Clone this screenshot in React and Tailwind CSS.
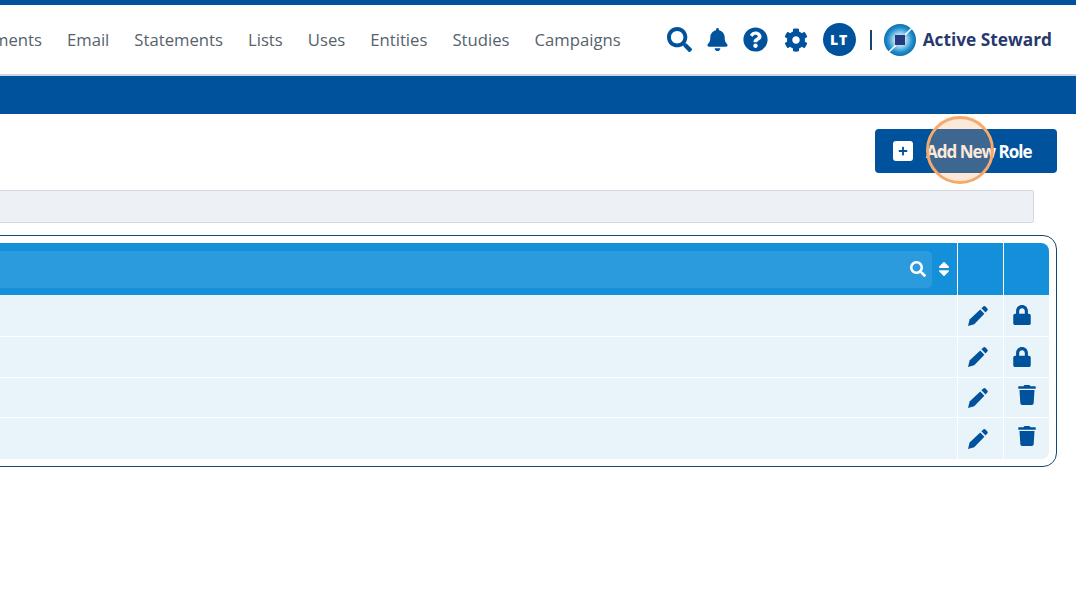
import { FaSearch, FaBell, FaQuestionCircle, FaCog, FaLock, FaTrash, FaPlus, FaSort } from 'react-icons/fa';

const navItems = ['Assessments', 'Email', 'Statements', 'Lists', 'Uses', 'Entities', 'Studies', 'Campaigns'];
const rows = [
  { h: 'h-[42px]', last: 'lock' },
  { h: 'h-[41px]', last: 'lock' },
  { h: 'h-[40px]', last: 'trash' },
  { h: 'h-[41px]', last: 'trash' },
];

function Logo() {
  return (
    <svg width="32" height="32" viewBox="0 0 32 32" className="shrink-0">
      <defs>
        <radialGradient id="orb" cx="50%" cy="50%" r="55%">
          <stop offset="0%" stopColor="#ffffff" />
          <stop offset="35%" stopColor="#a9d8ef" />
          <stop offset="70%" stopColor="#1f8fce" />
          <stop offset="100%" stopColor="#0b5f9e" />
        </radialGradient>
      </defs>
      <circle cx="16" cy="16" r="16" fill="url(#orb)" />
      <path d="M4 29 L12 21 M21 11 L29 3" stroke="#fff" strokeWidth="1.6" />
      <rect x="11" y="11" width="10" height="10" fill="#27397f" />
    </svg>
  );
}

function Pencil() {
  return (
    <svg width="20" height="20" viewBox="0 0 20 20" fill="currentColor">
      <path d="M0 20 L1.6 13.6 L12.2 3.4 L16.4 7.8 L6.2 18.2 Z" />
      <path d="M13.4 2.3 L15.3 .5 Q16.4 -.3 17.5 .6 L19.3 2.4 Q20.3 3.5 19.3 4.6 L17.5 6.6 Z" />
    </svg>
  );
}

function Row({ h, last, isLast }) {
  return (
    <div className={`flex ${h} ${isLast ? '' : 'border-b border-white'}`}>
      <div className="flex-1 bg-[#e8f3fa]" />
      <div className="w-[46px] bg-[#e8f3fa] border-l border-white flex items-center justify-center pr-[5px] text-[#00529c]">
        <Pencil />
      </div>
      <div className="w-[46px] bg-[#e8f3fa] border-l border-white flex justify-center text-[#00529c]">
        {last === 'lock' ? (
          <FaLock className="text-[20px] mt-[10px] mr-[10px]" />
        ) : (
          <FaTrash className={`text-[20px] ${isLast ? 'mt-[8px]' : 'mt-[7px]'}`} />
        )}
      </div>
    </div>
  );
}

export default function App() {
  return (
    <div className="relative h-[600px] w-[1076px] overflow-hidden bg-white font-['Open_Sans',sans-serif]">
      <div className="h-[5px] bg-[#00529c]" />
      <header className="flex h-[71px] items-center border-b-2 border-[#cfd5e2] bg-white">
        <nav className="flex min-w-0 flex-1 justify-end gap-[25px] overflow-hidden pr-[46px] text-[16.7px] text-[#56626d]">
          {navItems.map((item) => (
            <span key={item} className="shrink-0">{item}</span>
          ))}
        </nav>
        <div className="flex shrink-0 items-center pr-[24px] text-[#00529c]">
          <FaSearch className="text-[25px]" />
          <FaBell className="ml-[14px] text-[23px]" />
          <FaQuestionCircle className="ml-[14px] text-[25px]" />
          <FaCog className="ml-[16px] text-[24px]" />
          <div className="ml-[15px] flex h-[33px] w-[33px] items-center justify-center rounded-full bg-[#00529c] text-[14px] font-extrabold tracking-[1px] text-white">LT</div>
          <div className="ml-[14px] mr-[12px] h-[20px] w-[2px] bg-[#1c4468]" />
          <Logo />
          <span className="ml-[7px] text-[17.3px] font-bold text-[#27396f]">Active Steward</span>
        </div>
      </header>
      <div className="h-[38px] bg-[#00529c]" />

      <div className="flex justify-end pt-[15px] pr-[19px]">
        <button type="button" className="flex h-[44px] w-[182px] items-center rounded-[4px] bg-[#00529c] pl-[18px] text-white">
          <span className="flex h-[20px] w-[20px] items-center justify-center rounded-[3px] bg-white text-[#00529c]">
            <FaPlus className="text-[10px]" />
          </span>
          <span className="ml-[13px] translate-y-px text-[17px] font-bold tracking-[-1px]">Add New Role</span>
        </button>
      </div>

      <div className="mt-[17px] mr-[42px] -ml-[10px] h-[33px] rounded-[2px] border border-[#d5dae1] bg-[#edf0f5]" />

      <div className="mt-[12px] mr-[19px] -ml-[20px] rounded-[14px] border border-[#12496e] p-[7px]">
        <div className="flex h-[52px] overflow-hidden rounded-tr-[8px]">
          <div className="flex flex-1 items-center bg-[#148fd9] py-[7px]">
            <div className="flex h-[37px] flex-1 items-center justify-end rounded-r-[5px] bg-[#2b9bdd] pr-[6px] text-white">
              <FaSearch className="text-[16px]" />
            </div>
            <FaSort className="ml-[3px] mr-[4px] text-[18px] text-white" />
          </div>
          <div className="w-[46px] border-l border-white bg-[#148fd9]" />
          <div className="w-[46px] border-l border-white bg-[#148fd9]" />
        </div>
        <div className="overflow-hidden rounded-br-[8px]">
          {rows.map((row, i) => (
            <Row key={i} h={row.h} last={row.last} isLast={i === rows.length - 1} />
          ))}
        </div>
      </div>

      {/* click highlight over the button */}
      <div className="absolute left-[926px] top-[116px] h-[68px] w-[68px] rounded-full border-[3px] border-[#f5a96b] bg-[#f5a96b]/25" />
    </div>
  );
}
